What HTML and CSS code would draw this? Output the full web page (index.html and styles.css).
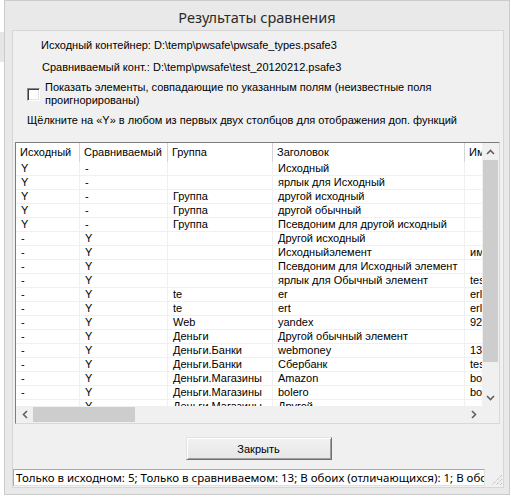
FILE: index.html
```html
<!DOCTYPE html>
<html lang="ru">
<head>
<meta charset="utf-8">
<title>Результаты сравнения</title>
<link rel="stylesheet" href="styles.css">
</head>
<body>
<div class="screen">
  <div class="behind">
    <div class="behind-top"></div>
    <div class="behind-band"></div>
  </div>
  <div class="window">
    <div class="titlebar">Результаты сравнения</div>
    <div class="client">
      <div class="info info-src">Исходный контейнер: D:\temp\pwsafe\pwsafe_types.psafe3</div>
      <div class="info info-cmp">Сравниваемый конт.: D:\temp\pwsafe\test_20120212.psafe3</div>
      <label class="check-row">
        <span class="checkbox"></span>
        <span class="check-label">Показать элементы, совпадающие по указанным полям (неизвестные поля проигнорированы)</span>
      </label>
      <div class="hint">Щёлкните на «Y» в любом из первых двух столбцов для отображения доп. функций</div>

      <div class="listview">
        <div class="viewport">
          <div class="lv-row lv-head">
            <div class="c c1">Исходный</div><div class="c c2">Сравниваемый</div><div class="c c3">Группа</div><div class="c c4">Заголовок</div><div class="c c5">Имя пользователя</div>
          </div>
          <div class="lv-row"><div class="c c1">Y</div><div class="c c2">-</div><div class="c c3"></div><div class="c c4">Исходный</div><div class="c c5"></div></div>
          <div class="lv-row"><div class="c c1">Y</div><div class="c c2">-</div><div class="c c3"></div><div class="c c4">ярлык для Исходный</div><div class="c c5"></div></div>
          <div class="lv-row"><div class="c c1">Y</div><div class="c c2">-</div><div class="c c3">Группа</div><div class="c c4">другой исходный</div><div class="c c5"></div></div>
          <div class="lv-row"><div class="c c1">Y</div><div class="c c2">-</div><div class="c c3">Группа</div><div class="c c4">другой обычный</div><div class="c c5"></div></div>
          <div class="lv-row"><div class="c c1">Y</div><div class="c c2">-</div><div class="c c3">Группа</div><div class="c c4">Псевдоним для другой исходный</div><div class="c c5"></div></div>
          <div class="lv-row"><div class="c c1">-</div><div class="c c2">Y</div><div class="c c3"></div><div class="c c4">Другой исходный</div><div class="c c5"></div></div>
          <div class="lv-row"><div class="c c1">-</div><div class="c c2">Y</div><div class="c c3"></div><div class="c c4">Исходныйэлемент</div><div class="c c5">имя</div></div>
          <div class="lv-row"><div class="c c1">-</div><div class="c c2">Y</div><div class="c c3"></div><div class="c c4">Псевдоним для Исходный элемент</div><div class="c c5"></div></div>
          <div class="lv-row"><div class="c c1">-</div><div class="c c2">Y</div><div class="c c3"></div><div class="c c4">ярлык для Обычный элемент</div><div class="c c5">test</div></div>
          <div class="lv-row"><div class="c c1">-</div><div class="c c2">Y</div><div class="c c3">te</div><div class="c c4">er</div><div class="c c5">erltest</div></div>
          <div class="lv-row"><div class="c c1">-</div><div class="c c2">Y</div><div class="c c3">te</div><div class="c c4">ert</div><div class="c c5">erltest</div></div>
          <div class="lv-row"><div class="c c1">-</div><div class="c c2">Y</div><div class="c c3">Web</div><div class="c c4">yandex</div><div class="c c5">92168</div></div>
          <div class="lv-row"><div class="c c1">-</div><div class="c c2">Y</div><div class="c c3">Деньги</div><div class="c c4">Другой обычный элемент</div><div class="c c5"></div></div>
          <div class="lv-row"><div class="c c1">-</div><div class="c c2">Y</div><div class="c c3">Деньги.Банки</div><div class="c c4">webmoney</div><div class="c c5">1354</div></div>
          <div class="lv-row"><div class="c c1">-</div><div class="c c2">Y</div><div class="c c3">Деньги.Банки</div><div class="c c4">Сбербанк</div><div class="c c5">test</div></div>
          <div class="lv-row"><div class="c c1">-</div><div class="c c2">Y</div><div class="c c3">Деньги.Магазины</div><div class="c c4">Amazon</div><div class="c c5">bolero</div></div>
          <div class="lv-row"><div class="c c1">-</div><div class="c c2">Y</div><div class="c c3">Деньги.Магазины</div><div class="c c4">bolero</div><div class="c c5">bolero</div></div>
          <div class="lv-row"><div class="c c1">-</div><div class="c c2">Y</div><div class="c c3">Деньги.Магазины</div><div class="c c4">Другой</div><div class="c c5"></div></div>
        </div>
        <div class="vscroll">
          <div class="arrow"><svg width="9" height="6" viewBox="0 0 9 6"><polyline points="1,5 4.5,1.5 8,5" fill="none" stroke="#606060" stroke-width="1.6"/></svg></div>
          <div class="vthumb"></div>
          <div class="vtrack"></div>
          <div class="arrow"><svg width="9" height="6" viewBox="0 0 9 6"><polyline points="1,1 4.5,4.5 8,1" fill="none" stroke="#606060" stroke-width="1.6"/></svg></div>
        </div>
        <div class="hscroll">
          <div class="arrow"><svg width="6" height="9" viewBox="0 0 6 9"><polyline points="5,1 1.5,4.5 5,8" fill="none" stroke="#606060" stroke-width="1.6"/></svg></div>
          <div class="hthumb"></div>
          <div class="htrack"></div>
          <div class="arrow"><svg width="6" height="9" viewBox="0 0 6 9"><polyline points="1,1 4.5,4.5 1,8" fill="none" stroke="#606060" stroke-width="1.6"/></svg></div>
        </div>
        <div class="corner"></div>
      </div>

      <button class="btn" type="button">Закрыть</button>

      <div class="status-row">
        <div class="status">Только в исходном: 5; Только в сравниваемом: 13; В обоих (отличающихся): 1; В обоих (идентичных): 0</div>
        <div class="grip">
          <svg width="13" height="13" viewBox="0 0 13 13">
            <line x1="12" y1="2" x2="2" y2="12" stroke="#a8a8a8" stroke-width="1" stroke-dasharray="1 1"/>
            <line x1="12" y1="6" x2="6" y2="12" stroke="#a8a8a8" stroke-width="1" stroke-dasharray="1 1"/>
            <line x1="12" y1="10" x2="10" y2="12" stroke="#a8a8a8" stroke-width="1" stroke-dasharray="1 1"/>
          </svg>
        </div>
      </div>
    </div>
  </div>
</div>
</body>
</html>
```
FILE: styles.css
```css
* { box-sizing: border-box; }
html, body { margin: 0; padding: 0; background: #ffffff; }
body {
  font-family: "Liberation Sans", Arial, sans-serif;
  font-size: 11px;
  color: #000;
}
.screen { display: flex; width: 511px; height: 500px; overflow: hidden; }
.behind { width: 4px; display: flex; flex-direction: column; }
.behind-top { height: 32px; background: #ffffff; }
.behind-band { height: 30px; background: #e6e6e6; }

.window {
  width: 506px;
  height: 495px;
  background: #e9e9e9;
  border: 1px solid #cbcbcb;
  display: flex;
  flex-direction: column;
}
.titlebar {
  height: 29px;
  text-align: center;
  font-family: "Noto Sans", "Open Sans", sans-serif;
  font-size: 14.5px;
  line-height: 32px;
  color: #2b2b2b;
}
.client {
  margin-left: 7px;
  width: 492px;
  height: 458px;
  background: #f0f0f0;
  border: 1px solid #d6d6d6;
  display: flex;
  flex-direction: column;
}
.info { height: 13px; line-height: 13px; white-space: nowrap; }
.info-src { margin-top: 8px; padding-left: 28px; }
.info-cmp { margin-top: 9px; padding-left: 29px; }

.check-row {
  margin-top: 7px;
  padding-left: 14px;
  display: flex;
  align-items: flex-start;
  gap: 5px;
}
.checkbox {
  flex: none;
  width: 13px;
  height: 13px;
  margin-top: 7px;
  background: #fff;
  border-top: 1px solid #8a8a8a;
  border-left: 1px solid #8a8a8a;
  border-right: 1px solid #fff;
  border-bottom: 1px solid #fff;
  box-shadow: inset 1px 1px 0 #3f3f3f, inset -1px -1px 0 #e3e3e3;
}
.check-label { width: 420px; line-height: 13px; }
.hint { margin-top: 7px; padding-left: 14px; height: 13px; line-height: 13px; white-space: nowrap; }

.listview {
  margin-top: 15px;
  margin-left: 2px;
  width: 485px;
  height: 282px;
  background: #fff;
  border-top: 1px solid #7c7c7c;
  border-left: 1px solid #7c7c7c;
  border-right: 1px solid #d8d8d8;
  border-bottom: 1px solid #d8d8d8;
  display: grid;
  grid-template-columns: 466px 17px;
  grid-template-rows: 263px 17px;
}
.viewport { overflow: hidden; background: #fff; }
.lv-row {
  display: flex;
  height: 14px;
  line-height: 13px;
  white-space: nowrap;
}
.lv-row .c {
  flex: none;
  overflow: hidden;
  padding-left: 5px;
  border-right: 1px solid #f0f0f0;
  border-bottom: 1px solid #f0f0f0;
}
.lv-head { height: 19px; line-height: 18px; }
.lv-head .c {
  border-right: 1px solid #d5d5d5;
  border-bottom: none;
  padding-left: 4px;
  box-shadow: inset -2px 0 0 #ffffff;
}
.c1 { width: 64px; }
.c2 { width: 88px; }
.c3 { width: 105px; }
.c4 { width: 192px; }
.c5 { width: 120px; }

.vscroll {
  grid-column: 2;
  grid-row: 1;
  background: #f0f0f0;
  display: flex;
  flex-direction: column;
}
.vscroll .arrow { height: 17px; display: flex; align-items: center; justify-content: center; }
.vthumb { margin: 0 1px 0 1px; height: 202px; background: #cdcdcd; }
.vtrack { flex: 1; }
.hscroll {
  grid-column: 1;
  grid-row: 2;
  background: #f0f0f0;
  display: flex;
}
.hscroll .arrow { width: 17px; display: flex; align-items: center; justify-content: center; }
.hthumb { width: 102px; margin: 1px 0; background: #cdcdcd; }
.htrack { flex: 1; }
.corner { grid-column: 2; grid-row: 2; background: #f0f0f0; }

.btn {
  margin-top: 13px;
  align-self: center;
  margin-left: 1px;
  width: 146px;
  height: 23px;
  font-family: "Liberation Sans", Arial, sans-serif;
  font-size: 11px;
  color: #000;
  background: linear-gradient(#f2f2f2, #e6e6e6);
  border-top: 1px solid #e3e3e3;
  border-left: 1px solid #e3e3e3;
  border-right: 1px solid #6f6f6f;
  border-bottom: 1px solid #6f6f6f;
  box-shadow: inset 1px 1px 0 #ffffff, inset -1px -1px 0 #a0a0a0;
  padding: 0;
}
.status-row { margin-top: 9px; display: flex; align-items: flex-end; }
.status {
  width: 472px;
  height: 17px;
  background: #fff;
  border: 1px solid #a9a9a9;
  border-right-color: #e0e0e0;
  border-bottom-color: #e0e0e0;
  overflow: hidden;
  white-space: nowrap;
  font-family: "Noto Sans", "Open Sans", sans-serif;
  font-size: 11.5px;
  line-height: 15px;
  padding-left: 2px;
}
.grip { margin-left: 5px; width: 13px; height: 13px; margin-bottom: 0; }
.grip svg { display: block; }
```
